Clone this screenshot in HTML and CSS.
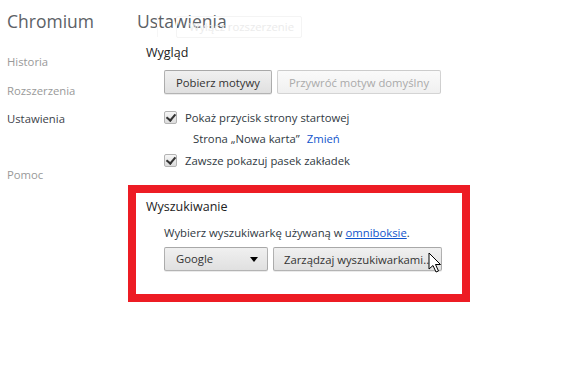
FILE: index.html
```html
<!DOCTYPE html>
<html lang="pl">
<head>
  <meta charset="UTF-8">
  <link rel="stylesheet" href="styles.css">
</head>
<body>
  <div class="page">
    <div class="sidebar">
      <h1 class="brand">Chromium</h1>
      <ul class="nav">
        <li class="nav-item">Historia</li>
        <li class="nav-item">Rozszerzenia</li>
        <li class="nav-item selected">Ustawienia</li>
        <li class="nav-item help">Pomoc</li>
      </ul>
    </div>

    <div class="main">
      <h1 class="page-title">Ustawienia</h1>
      <!-- faded leftover of the extensions page -->
      <div class="ghost"><span class="ghost-button">Wyłącz rozszerzenie</span></div>

      <div class="section">
        <h3 class="section-title">Wygląd</h3>
        <div class="section-body">
          <div class="button-row">
            <button class="btn">Pobierz motywy</button>
            <button class="btn" disabled>Przywróć motyw domyślny</button>
          </div>
          <label class="check-row first"><span class="checkbox"></span>Pokaż przycisk strony startowej</label>
          <div class="sub-row">Strona „Nowa karta”<a class="link">Zmień</a></div>
          <label class="check-row"><span class="checkbox"></span>Zawsze pokazuj pasek zakładek</label>
        </div>
      </div>

      <div class="section highlight">
        <h3 class="section-title">Wyszukiwanie</h3>
        <div class="section-body">
          <div class="text-row">Wybierz wyszukiwarkę używaną w <a class="link underline">omniboksie</a>.</div>
          <div class="button-row search-row">
            <div class="select">Google<span class="arrow"></span></div>
            <button class="btn wide">Zarządzaj wyszukiwarkami...</button>
            <svg class="cursor" width="14" height="22" viewBox="0 0 14 22">
              <path d="M1 1 L1 17 L5 13.5 L8 20 L10.5 19 L7.5 12.5 L12.5 12.5 Z" fill="#fff" stroke="#000" stroke-width="1"/>
            </svg>
          </div>
        </div>
      </div>
    </div>
  </div>
</body>
</html>
```

FILE: styles.css
```css
body {
  margin: 0;
  font-family: "Open Sans", "Noto Sans", sans-serif;
  font-size: 11.3px;
  color: #303942;
  background-color: #fff;
}

.page {
  display: flex;
}

.sidebar {
  width: 137px;
  flex-shrink: 0;
  padding-left: 7px;
  box-sizing: border-box;
}

.brand {
  margin: 9px 0 0;
  font-size: 17.5px;
  font-weight: normal;
  line-height: 24px;
  color: #5c6166;
}

.nav {
  list-style: none;
  margin: 19px 0 0;
  padding: 0;
}

.nav-item {
  height: 28.5px;
  line-height: 20px;
  color: #999;
}

.nav-item.selected {
  color: #3c424a;
}

.nav-item.help {
  margin-top: 27px;
}

.main {
  flex: 1;
  position: relative;
}

.page-title {
  margin: 9px 0 0;
  font-size: 17.5px;
  font-weight: normal;
  line-height: 24px;
  color: #5c6166;
}

.ghost {
  position: absolute;
  top: 16px;
  left: 20px;
  width: 150px;
  height: 21px;
  border-left: 1px solid #f6f6f6;
}

.ghost-button {
  position: absolute;
  left: 18px;
  top: 0;
  width: 112px;
  height: 20px;
  padding-left: 12px;
  line-height: 20px;
  border: 1px solid #f4f4f4;
  border-radius: 2px;
  color: #ebebeb;
}

.section {
  padding-left: 9px;
}

.section-title {
  margin: 11px 0 0;
  font-size: 12.5px;
  font-weight: normal;
  line-height: 18px;
  height: 18px;
  color: #222;
}

.section-body {
  padding-left: 18px;
}

.button-row {
  display: flex;
  gap: 5px;
  margin-top: 8px;
}

.btn {
  font-family: inherit;
  font-size: 11.3px;
  color: #333;
  height: 24px;
  padding: 0 11px;
  white-space: nowrap;
  border: 1px solid rgba(0, 0, 0, 0.25);
  border-radius: 2px;
  background: linear-gradient(#f0f0f0, #e0e0e0);
  box-shadow: 0 1px 0 rgba(0, 0, 0, 0.08);
}

.btn:disabled {
  color: #aaa;
  border-color: rgba(0, 0, 0, 0.15);
  background: linear-gradient(#fafafa, #f0f0f0);
  box-shadow: none;
}

.check-row {
  display: flex;
  align-items: center;
  height: 21px;
}

.check-row.first {
  margin-top: 13px;
}

.checkbox {
  width: 11px;
  height: 11px;
  margin-right: 8px;
  border: 1px solid #b3b3b3;
  border-radius: 2px;
  background: linear-gradient(#f6f6f6, #dcdcdc);
  position: relative;
}

.checkbox::after {
  content: "";
  position: absolute;
  left: 3px;
  top: 0;
  width: 4px;
  height: 7px;
  border: solid #333;
  border-width: 0 2px 2px 0;
  transform: rotate(40deg);
}

.sub-row {
  height: 22px;
  line-height: 22px;
  padding-left: 29px;
}

.link {
  color: #15c;
  margin-left: 7px;
  cursor: pointer;
}

.link.underline {
  margin-left: 0;
  text-decoration: underline;
}

.highlight {
  margin-top: 14px;
  margin-left: -9px;
  width: 316px;
  height: 101px;
  border: 8px solid #ed1c24;
  padding-left: 10px;
}

.highlight .section-title {
  margin-top: 5px;
}

.text-row {
  margin-top: 9px;
  line-height: 16px;
}

.search-row {
  position: relative;
  margin-top: 6px;
}

.select {
  width: 104px;
  height: 24px;
  line-height: 22px;
  padding-left: 11px;
  box-sizing: border-box;
  border: 1px solid rgba(0, 0, 0, 0.25);
  border-radius: 2px;
  background: linear-gradient(#f0f0f0, #e0e0e0);
  box-shadow: 0 1px 0 rgba(0, 0, 0, 0.08);
  color: #333;
  position: relative;
}

.arrow {
  position: absolute;
  right: 9px;
  top: 9px;
  border-left: 4px solid transparent;
  border-right: 4px solid transparent;
  border-top: 5px solid #000;
}

.wide {
  width: 169px;
  padding: 0 10px;
  text-align: left;
}

.cursor {
  position: absolute;
  left: 264px;
  top: 5px;
}
```
